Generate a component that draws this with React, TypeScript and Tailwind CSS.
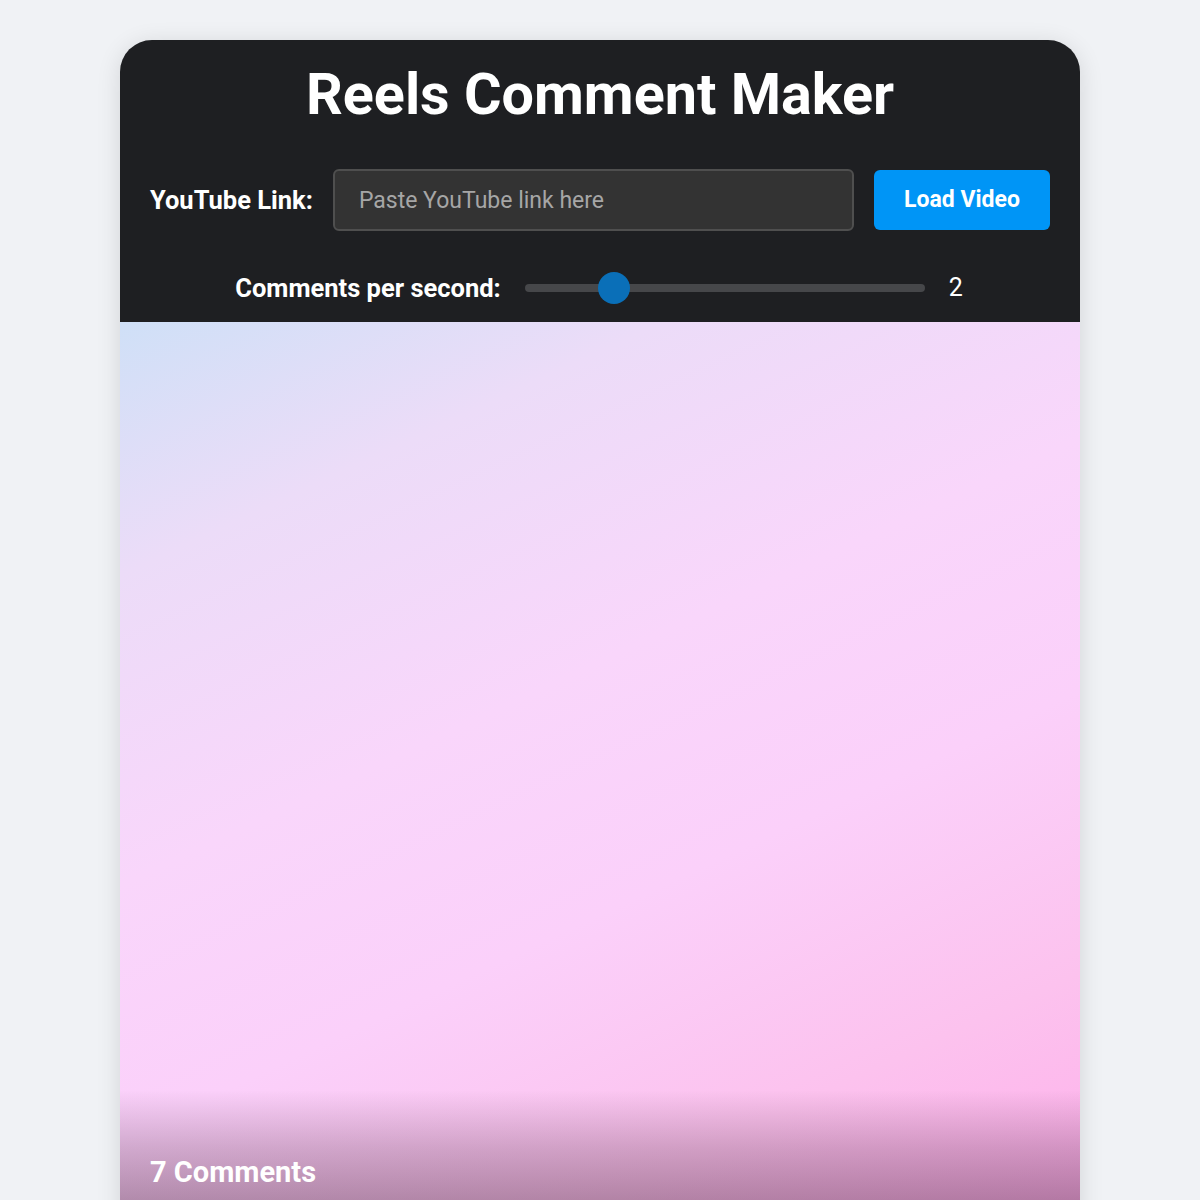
import { useState } from "react";

export default function App() {
  const [url, setUrl] = useState("");
  const [rate] = useState(2);
  const pct = rate / 10;

  return (
    <div
      className="min-h-screen bg-[#f0f2f5] flex justify-center pt-10"
      style={{ fontFamily: "Roboto, 'Open Sans', sans-serif" }}
    >
      <div className="w-[960px] rounded-t-[32px] overflow-hidden bg-[#1e1f22] shadow-[0_4px_24px_rgba(0,0,0,0.12)] flex flex-col">
        {/* Header / controls */}
        <div className="px-[30px] pt-[20px] pb-[18px]">
          <h1 className="text-white text-[57.5px] leading-[70px] font-bold text-center">
            Reels Comment Maker
          </h1>

          <div className="mt-[39px] flex items-center gap-5">
            <label className="text-white text-[25.5px] leading-8 font-bold whitespace-nowrap">YouTube Link:</label>
            <input
              value={url}
              onChange={(e) => setUrl(e.target.value)}
              placeholder="Paste YouTube link here"
              className="flex-1 h-[62px] rounded-md bg-[#333333] border-2 border-[#4f4f4f] px-[24px] text-[23px] text-white placeholder:text-[#a6a6a6] outline-none"
            />
            <button className="w-[176px] h-[60px] rounded-md bg-[#0095f6] text-white text-[23px] font-bold">
              Load Video
            </button>
          </div>

          <div className="mt-[41px] h-8 flex items-center justify-center gap-6">
            <span className="text-white text-[25.5px] leading-8 font-bold">Comments per second:</span>
            <div className="relative w-[400px] h-8 flex items-center">
              <div className="w-full h-2 rounded-full bg-[#46474a]" />
              <div
                className="absolute top-0 w-8 h-8 rounded-full bg-[#0a6fb8]"
                style={{ left: `calc(${pct} * (100% - 32px))` }}
              />
            </div>
            <span className="text-white text-[25px] leading-8 w-4">{rate}</span>
          </div>
        </div>

        {/* Reel preview */}
        <div className="h-[960px] flex flex-col bg-[linear-gradient(155deg,#cfe0f7_0%,#ecdcf8_18%,#f9d6fb_40%,#fbd0fa_58%,#fcc2ee_78%,#ffaaea_100%)]">
          <div className="h-full flex flex-col bg-[linear-gradient(to_bottom,transparent_0%,transparent_80%,rgba(40,15,30,0.2)_86%,rgba(40,15,30,0.36)_92%,rgba(40,15,30,0.5)_100%)]">
            <div className="mt-[829px] px-[30px]">
              <h2 className="text-white text-[29px] font-bold">7 Comments</h2>
            </div>
          </div>
        </div>
      </div>
    </div>
  );
}
